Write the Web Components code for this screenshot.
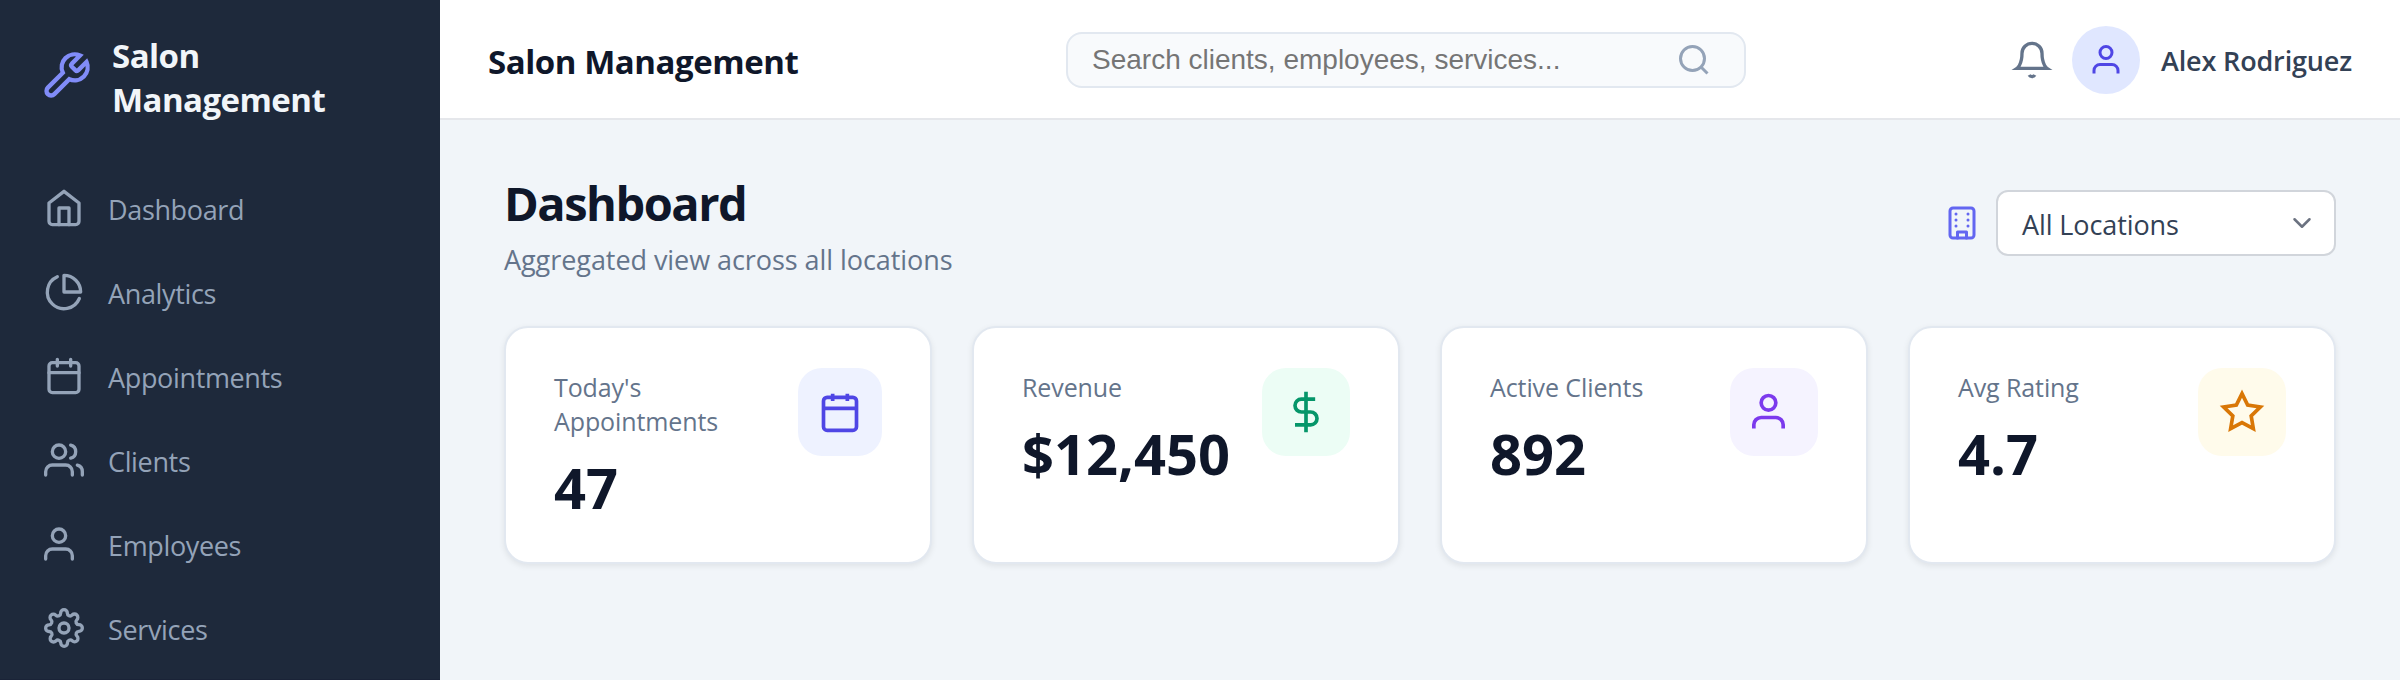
<!DOCTYPE html>
<html lang="en">
<head>
<meta charset="utf-8">
<title>Salon Management</title>
<style>
  body {
    margin: 0;
    font-family: "Open Sans", "Noto Sans", sans-serif;
    background: #f1f5f9;
    color: #0f172a;
  }
</style>
</head>
<body>
<salon-app>
  <salon-sidebar slot="sidebar">
    <span slot="brand">Salon<br>Management</span>
    <nav-item icon="home">Dashboard</nav-item>
    <nav-item icon="pie">Analytics</nav-item>
    <nav-item icon="calendar">Appointments</nav-item>
    <nav-item icon="users">Clients</nav-item>
    <nav-item icon="user">Employees</nav-item>
    <nav-item icon="settings">Services</nav-item>
  </salon-sidebar>
  <top-bar slot="header" user="Alex Rodriguez">Salon Management</top-bar>
  <page-heading>
    Dashboard
    <span slot="subtitle">Aggregated view across all locations</span>
    <location-select slot="actions">All Locations</location-select>
  </page-heading>
  <stat-grid>
    <stat-card icon="calendar" value="47" narrow style="--tile: #eef2ff; --accent: #4f46e5">Today's<br>Appointments</stat-card>
    <stat-card icon="dollar" value="$12,450" style="--tile: #ecfdf5; --accent: #059669">Revenue</stat-card>
    <stat-card icon="user" value="892" style="--tile: #f5f3ff; --accent: #7c3aed">Active Clients</stat-card>
    <stat-card icon="star" value="4.7" style="--tile: #fffbeb; --accent: #d97706">Avg Rating</stat-card>
  </stat-grid>
</salon-app>

<script>
const icons = {
  tool: '<path d="M14.7 6.3a1 1 0 0 0 0 1.4l1.6 1.6a1 1 0 0 0 1.4 0l3.77-3.77a6 6 0 0 1-7.94 7.94l-6.91 6.91a2.12 2.12 0 0 1-3-3l6.91-6.91a6 6 0 0 1 7.94-7.94l-3.76 3.76z"/>',
  home: '<path d="M3 9l9-7 9 7v11a2 2 0 0 1-2 2H5a2 2 0 0 1-2-2z"/><polyline points="9 22 9 12 15 12 15 22"/>',
  pie: '<path d="M21.21 15.89A10 10 0 1 1 8 2.83"/><path d="M22 12A10 10 0 0 0 12 2v10z"/>',
  calendar: '<rect x="3" y="4" width="18" height="18" rx="2"/><path d="M16 2v4M8 2v4M3 10h18"/>',
  users: '<path d="M17 21v-2a4 4 0 0 0-4-4H5a4 4 0 0 0-4 4v2"/><circle cx="9" cy="7" r="4"/><path d="M23 21v-2a4 4 0 0 0-3-3.87"/><path d="M16 3.13a4 4 0 0 1 0 7.75"/>',
  user: '<path d="M17 21v-2a4 4 0 0 0-4-4H5a4 4 0 0 0-4 4v2"/><circle cx="9" cy="7" r="4"/>',
  person: '<path d="M20 21v-2a4 4 0 0 0-4-4H8a4 4 0 0 0-4 4v2"/><circle cx="12" cy="7" r="4"/>',
  settings: '<circle cx="12" cy="12" r="3"/><path d="M19.4 15a1.65 1.65 0 0 0 .33 1.82l.06.06a2 2 0 0 1 0 2.83 2 2 0 0 1-2.83 0l-.06-.06a1.65 1.65 0 0 0-1.82-.33 1.65 1.65 0 0 0-1 1.51V21a2 2 0 0 1-2 2 2 2 0 0 1-2-2v-.09A1.65 1.65 0 0 0 9 19.4a1.65 1.65 0 0 0-1.82.33l-.06.06a2 2 0 0 1-2.83 0 2 2 0 0 1 0-2.83l.06-.06a1.65 1.65 0 0 0 .33-1.82 1.65 1.65 0 0 0-1.51-1H3a2 2 0 0 1-2-2 2 2 0 0 1 2-2h.09A1.65 1.65 0 0 0 4.6 9a1.65 1.65 0 0 0-.33-1.82l-.06-.06a2 2 0 0 1 0-2.83 2 2 0 0 1 2.83 0l.06.06a1.65 1.65 0 0 0 1.82.33H9a1.65 1.65 0 0 0 1-1.51V3a2 2 0 0 1 2-2 2 2 0 0 1 2 2v.09a1.65 1.65 0 0 0 1 1.51 1.65 1.65 0 0 0 1.82-.33l.06-.06a2 2 0 0 1 2.83 0 2 2 0 0 1 0 2.83l-.06.06a1.65 1.65 0 0 0-.33 1.82V9a1.65 1.65 0 0 0 1.51 1H21a2 2 0 0 1 2 2 2 2 0 0 1-2 2h-.09a1.65 1.65 0 0 0-1.51 1z"/>',
  search: '<circle cx="11" cy="11" r="8"/><path d="M21 21l-4.35-4.35"/>',
  bell: '<path d="M18 8A6 6 0 0 0 6 8c0 7-3 9-3 9h18s-3-2-3-9"/><path d="M13.73 21a2 2 0 0 1-3.46 0"/>',
  building: '<rect x="4" y="2" width="16" height="20" rx="2"/><path d="M9 22v-4h6v4"/><path d="M8 6h.01M16 6h.01M8 10h.01M16 10h.01M8 14h.01M16 14h.01"/>',
  dollar: '<path d="M12 1v22M17 5H9.5a3.5 3.5 0 0 0 0 7h5a3.5 3.5 0 0 1 0 7H6"/>',
  star: '<polygon points="12 2 15.09 8.26 22 9.27 17 14.14 18.18 21.02 12 17.77 5.82 21.02 7 14.14 2 9.27 8.91 8.26 12 2"/>',
  chevron: '<path d="M6 9l6 6 6-6"/>'
};

function define(name, render) {
  customElements.define(name, class extends HTMLElement {
    constructor() {
      super();
      this.attachShadow({ mode: "open" });
    }

    connectedCallback() {
      this.shadowRoot.innerHTML = render(this);
    }
  });
}

define("ui-icon", (el) => `
  <style>
    :host { display: block; flex: none; width: 40px; height: 40px; }
    svg { display: block; width: 100%; height: 100%; overflow: visible; fill: none; stroke: currentColor; stroke-width: 2; }
    :host([round]) svg { stroke-linecap: round; stroke-linejoin: round; }
  </style>
  <svg viewBox="0 0 24 24">${icons[el.getAttribute("name")]}</svg>
`);

define("salon-app", () => `
  <style>
    :host { display: grid; grid-template-columns: 440px 1fr; height: 680px; overflow: hidden; }
    .main { display: flex; flex-direction: column; min-width: 0; }
    main { padding: 60px 64px; }
  </style>
  <slot name="sidebar"></slot>
  <div class="main">
    <slot name="header"></slot>
    <main><slot></slot></main>
  </div>
`);

define("salon-sidebar", () => `
  <style>
    :host { display: block; box-sizing: border-box; background: #1e293b; border-bottom: 1px solid #1a2337; }
    .brand {
      display: flex;
      align-items: center;
      gap: 20px;
      height: 88px;
      padding: 34px 40px 44px;
      color: #f1f5f9;
      font-size: 33px;
      font-weight: 700;
      letter-spacing: -0.55px;
      line-height: 44px;
    }
    .brand ui-icon { width: 52px; height: 52px; margin-bottom: 4px; color: #818cf8; }
    nav { display: flex; flex-direction: column; }
  </style>
  <div class="brand"><ui-icon name="tool"></ui-icon><slot name="brand"></slot></div>
  <nav><slot></slot></nav>
`);

define("nav-item", (el) => `
  <style>
    :host { display: flex; align-items: center; gap: 24px; height: 84px; padding: 0 44px; color: #94a3b8; font-size: 27px; letter-spacing: -0.35px; }
    span { padding-top: 2px; }
  </style>
  <ui-icon name="${el.getAttribute("icon")}" round></ui-icon>
  <span><slot></slot></span>
`);

define("top-bar", (el) => `
  <style>
    :host {
      display: flex;
      align-items: center;
      box-sizing: border-box;
      height: 120px;
      padding: 2px 48px 0;
      background: #fff;
      border-bottom: 2px solid #e5e7eb;
    }
    .title { width: 578px; padding-top: 2px; font-size: 33px; font-weight: 700; letter-spacing: -0.45px; white-space: nowrap; }
    .search {
      display: flex;
      align-items: center;
      justify-content: space-between;
      box-sizing: border-box;
      width: 680px;
      height: 56px;
      padding: 0 32px 0 24px;
      border: 2px solid #e2e8f0;
      border-radius: 16px;
      background: #f8fafc;
      color: #757575;
      font: 28px "Liberation Sans", Arial, sans-serif;
    }
    .search ui-icon { width: 36px; height: 36px; color: #94a3b8; }
    .user { display: flex; align-items: center; margin-left: auto; color: #334155; font-size: 27px; font-weight: 600; letter-spacing: -0.15px; white-space: nowrap; }
    .bell { color: #64748b; }
    .avatar { display: grid; place-items: center; width: 68px; height: 68px; margin: 0 21px 0 20px; border-radius: 50%; background: #e0e7ff; color: #4f46e5; }
    .avatar ui-icon { width: 36px; height: 36px; }
  </style>
  <div class="title"><slot></slot></div>
  <div class="search"><span>Search clients, employees, services...</span><ui-icon name="search"></ui-icon></div>
  <div class="user">
    <ui-icon class="bell" name="bell"></ui-icon>
    <div class="avatar"><ui-icon name="person"></ui-icon></div>
    <span>${el.getAttribute("user")}</span>
  </div>
`);

define("page-heading", () => `
  <style>
    :host { display: flex; align-items: center; justify-content: space-between; height: 86px; margin-bottom: 60px; }
    h1 { margin: 0 0 8px; font-size: 47px; line-height: 60px; font-weight: 700; letter-spacing: -1.5px; }
    p { margin: 0; color: #64748b; font-size: 27px; line-height: 38px; letter-spacing: -0.06px; }
    .text { padding-top: 5px; }
  </style>
  <div class="text">
    <h1><slot></slot></h1>
    <p><slot name="subtitle"></slot></p>
  </div>
  <slot name="actions"></slot>
`);

define("location-select", () => `
  <style>
    :host { display: flex; align-items: center; gap: 16px; }
    .building { width: 36px; height: 36px; color: #6366f1; }
    .box {
      display: flex;
      align-items: center;
      justify-content: space-between;
      box-sizing: border-box;
      width: 340px;
      height: 66px;
      padding: 0 17px 0 24px;
      border: 2px solid #d1d5db;
      border-radius: 12px;
      background: #fff;
      color: #334155;
      font-size: 27px;
      letter-spacing: -0.1px;
    }
    .box span { padding-top: 2px; }
    .box ui-icon { width: 30px; height: 30px; color: #6b7280; }
  </style>
  <ui-icon class="building" name="building" round></ui-icon>
  <div class="box"><span><slot></slot></span><ui-icon name="chevron" round></ui-icon></div>
`);

define("stat-grid", () => `
  <style>
    :host { display: grid; grid-template-columns: repeat(4, 1fr); gap: 40px; }
  </style>
  <slot></slot>
`);

define("stat-card", (el) => `
  <style>
    :host {
      display: flex;
      justify-content: space-between;
      align-items: flex-start;
      box-sizing: border-box;
      height: 238px;
      padding: 40px 48px;
      border: 2px solid #e2e8f0;
      border-radius: 24px;
      background: #fff;
      box-shadow: 0 2px 6px rgba(0, 0, 0, 0.08);
    }
    .label { padding-top: 2px; color: #64748b; font-size: 25px; line-height: 34px; letter-spacing: -0.1px; white-space: nowrap; }
    .value { margin-top: 15px; font-size: 56px; line-height: 68px; font-weight: 700; }
    .tile { display: grid; place-items: center; width: 88px; height: 88px; border-radius: 24px; background: var(--tile); color: var(--accent); }
    :host([narrow]) .tile { width: 84px; }
    .tile ui-icon { width: 44px; height: 44px; }
  </style>
  <div>
    <div class="label"><slot></slot></div>
    <div class="value">${el.getAttribute("value")}</div>
  </div>
  <div class="tile"><ui-icon name="${el.getAttribute("icon")}"></ui-icon></div>
`);
</script>
</body>
</html>
